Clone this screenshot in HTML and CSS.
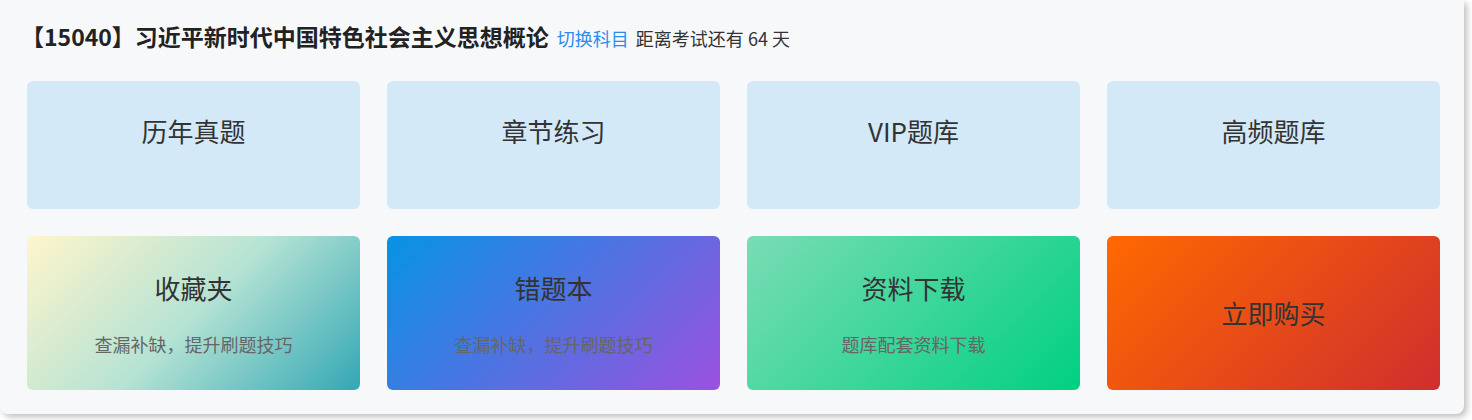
FILE: index.html
```html
<!DOCTYPE html>
<html lang="zh-CN">
<head>
<meta charset="utf-8">
<link rel="stylesheet" href="styles.css">
</head>
<body>
<div class="panel">
  <div class="header">
    <span class="course">【15040】习近平新时代中国特色社会主义思想概论</span>
    <a class="switch">切换科目</a>
    <span class="countdown">距离考试还有 64 天</span>
  </div>
  <div class="grid">
    <div class="card plain"><div class="card-title">历年真题</div></div>
    <div class="card plain"><div class="card-title">章节练习</div></div>
    <div class="card plain"><div class="card-title">VIP题库</div></div>
    <div class="card plain"><div class="card-title">高频题库</div></div>
    <div class="card ocean"><div class="card-title">收藏夹</div><div class="card-sub">查漏补缺，提升刷题技巧</div></div>
    <div class="card purple"><div class="card-title">错题本</div><div class="card-sub">查漏补缺，提升刷题技巧</div></div>
    <div class="card green"><div class="card-title">资料下载</div><div class="card-sub">题库配套资料下载</div></div>
    <div class="card orange"><div class="card-title">立即购买</div></div>
  </div>
</div>
</body>
</html>
```
FILE: styles.css
```css
html, body {
  margin: 0;
  padding: 0;
  background: #ffffff;
}
body {
  font-family: "Noto Sans CJK SC", "Noto Sans", sans-serif;
  width: 1472px;
  height: 420px;
  overflow: hidden;
}
.panel {
  width: 1464px;
  height: 414px;
  box-sizing: border-box;
  padding: 19px 24px 24px 27px;
  background: #f7f8fa;
  border-radius: 0 0 8px 8px;
  box-shadow: 3px 3px 6px rgba(0, 0, 0, 0.25);
}
.header {
  display: flex;
  align-items: baseline;
  height: 34px;
  margin-bottom: 28px;
}
.course {
  font-size: 23px;
  line-height: 34px;
  font-weight: 700;
  color: #222;
  margin-left: -6px;
}
.switch {
  font-size: 18px;
  color: #2d8cf0;
  margin-left: 8px;
  cursor: pointer;
}
.countdown {
  font-size: 18px;
  color: #333;
  margin-left: 7px;
}
.grid {
  display: grid;
  grid-template-columns: repeat(4, 1fr);
  grid-template-rows: 128px 154px;
  gap: 27px;
}
.card {
  border-radius: 6px;
  display: flex;
  flex-direction: column;
  align-items: center;
  justify-content: center;
}
.card.plain {
  justify-content: flex-start;
  padding-top: 32px;
}
.card-title {
  font-size: 26px;
  line-height: 36px;
  color: #333;
}
.card-sub {
  font-size: 18px;
  line-height: 26px;
  color: #666;
  margin-top: 25px;
}
.plain { background: #d3e9f7; }
.ocean { background: linear-gradient(135deg, #fff5cb 0%, #b6e3d4 50%, #33a7b5 100%); }
.purple { background: linear-gradient(135deg, #0693e3 0%, #9b51e0 100%); }
.green { background: linear-gradient(135deg, #7adcb4 0%, #00d082 100%); }
.orange { background: linear-gradient(135deg, #ff6900 0%, #cf2e2e 100%); }
```
